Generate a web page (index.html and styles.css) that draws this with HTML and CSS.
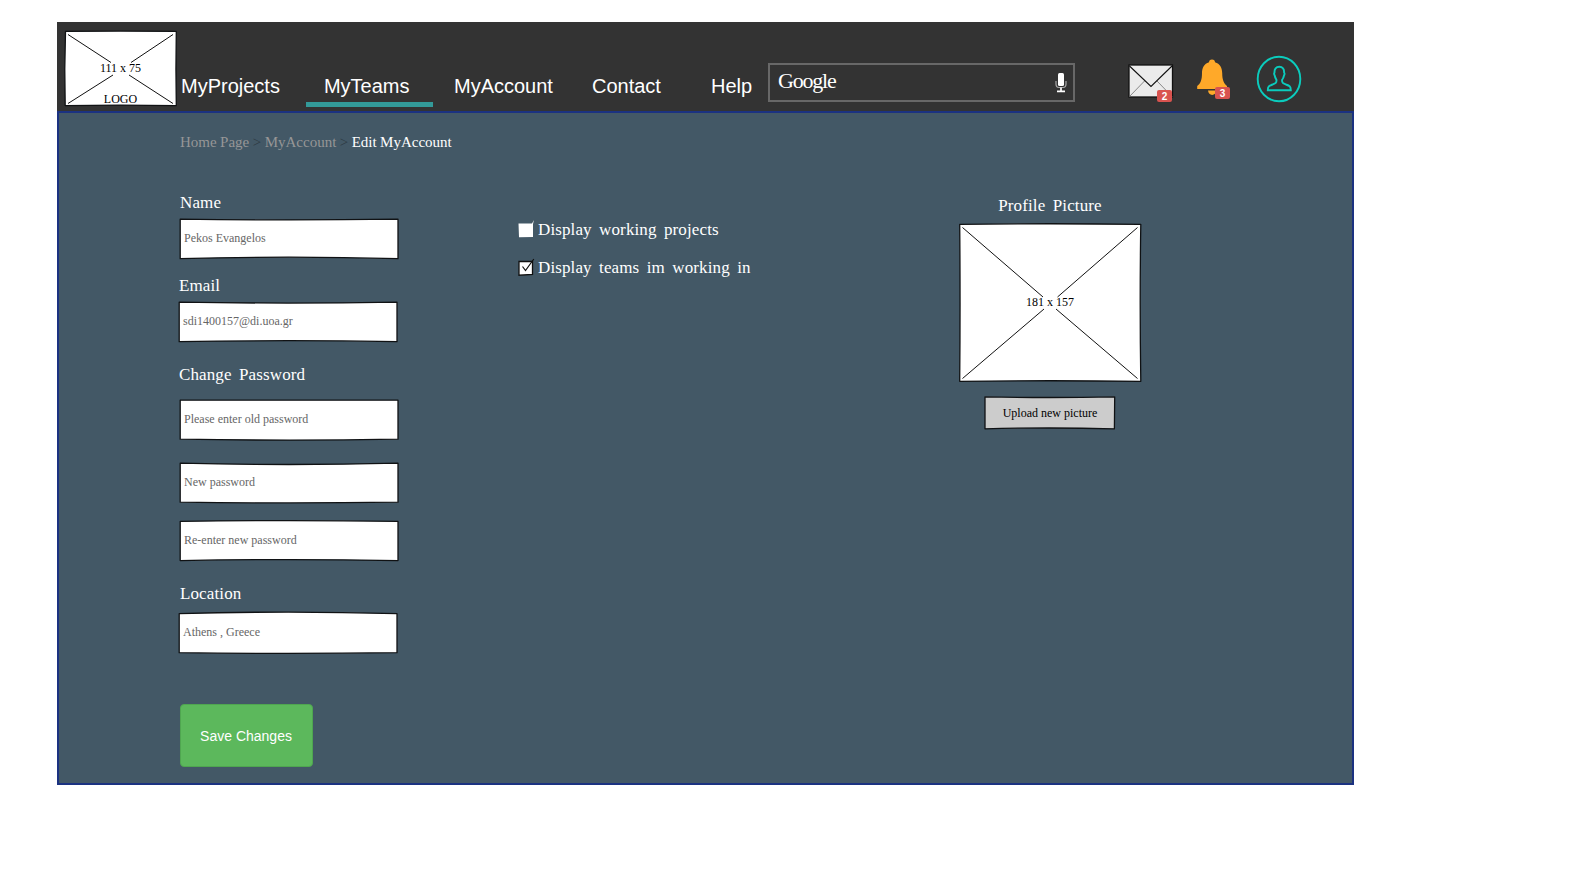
FILE: index.html
```html
<!DOCTYPE html>
<html lang="en">
<head>
<meta charset="utf-8">
<title>Edit MyAccount</title>
<link rel="stylesheet" href="styles.css">
</head>
<body>
<header class="topbar">
  <a class="logo">
    <svg class="sketch" width="113" height="76" viewBox="0 0 113 76"><path class="paper" d="M1.500 .4Q56 -.2 112.300 .4Q111.600 38 112.300 74.600Q56 73.600 1.200 74.600Q.2 38 1.500 .4Z"/><path class="cross" d="M4 3.500 47 31.500M109 3.500 67 31.500M4 72.500 49 44M109 72.500 65 44"/></svg>
    <span class="logo-size">111 x 75</span>
    <span class="logo-name">LOGO</span>
  </a>
  <nav class="nav">
    <a class="nav-projects">MyProjects</a>
    <a class="nav-teams">MyTeams</a>
    <a class="nav-account">MyAccount</a>
    <a class="nav-contact">Contact</a>
    <a class="nav-help">Help</a>
  </nav>
  <div class="search">
    <span class="brand">Google</span>
    <svg width="12" height="20" viewBox="0 0 12 20"><rect x="3" y="0" width="6" height="13" rx="1.500" fill="#fff"/><path d="M1 8v3Q1 14.500 4 14.500H8Q11 14.500 11 11V8" fill="none" stroke="#aaa" stroke-width="1.200"/><path d="M6 14.500V18M2 18.300H10" stroke="#fff" stroke-width="1.700"/></svg>
  </div>
  <div class="mail">
    <svg width="46" height="36" viewBox="0 0 46 36"><rect x="1" y="1" width="43.500" height="32" fill="#ebebeb" stroke="#111" stroke-width="1.300"/><path d="M1.500 32.500 16.500 17M44 32.500 29 17" stroke="#888" stroke-width="1"/><path d="M1.500 2 23 22.500 44 2" fill="none" stroke="#111" stroke-width="1.100"/></svg>
    <span class="badge">2</span>
  </div>
  <div class="bell">
    <svg width="31" height="37" viewBox="0 0 31 37"><path d="M15 .5C17 .5 18 1.800 18 3.200C23 4.700 25.200 9 25.200 14C25.200 21 27 24.500 30 27V30H.2V27C3.500 24.500 5 21 5 14C5 9 7.200 4.700 12 3.200C12 1.800 13 .5 15 .5ZM11 31.600H19.500C19 34.500 17.500 36 15.200 36S11.500 34.500 11 31.600Z" fill="#ffa929"/></svg>
    <span class="badge">3</span>
  </div>
  <svg class="user" width="46" height="48" viewBox="0 0 46 48" fill="none" stroke="#0bccbd" stroke-width="1.900"><ellipse cx="23" cy="24" rx="21.300" ry="22.300"/><path d="M23.300 11.800C20 11.800 18.300 14 18.500 17.500C18.200 18 18 19.500 18.700 20.500C19 22.500 19.800 23.800 20.500 25C20.600 28 19.500 28.300 16.500 29.500C13 30.800 11.800 31.500 11.800 35.300H34.800C34.800 31.500 33.600 30.800 30 29.500C27 28.300 26 28 26 25C27 23.800 27.600 22.500 28 20.500C28.600 19.500 28.500 18 28.100 17.500C28.300 14 26.600 11.800 23.300 11.800Z"/></svg>
</header>
<main class="panel">
  <div class="crumbs"><a>Home Page</a> <i>&gt;</i> <a>MyAccount</a> <i>&gt;</i> <b>Edit MyAccount</b></div>
  <div class="columns">
    <form class="account">
      <label class="title">Name</label>
      <div class="field f-name"><svg class="sketch" width="221" height="42" viewBox="0 0 221 42"><path class="paper" d="M1.200 1.200Q110 2.700 219 1.200V40.700Q110 37.700 1.200 40.700Z"/></svg><span>Pekos Evangelos</span></div>
      <label class="title t-email">Email</label>
      <div class="field f-email"><svg class="sketch" width="221" height="42" viewBox="0 0 221 42"><path class="paper" d="M1.200 1.200Q110 2.900 219 1.200V40.700Q110 38.700 1.200 40.700Z"/></svg><span>sdi1400157@di.uoa.gr</span></div>
      <label class="title t-password">Change Password</label>
      <div class="field f-old"><svg class="sketch" width="221" height="42" viewBox="0 0 221 42"><path class="paper" d="M1.200 1.200Q110 1.400 219 1.200V40.200Q110 42 1.200 40.200Z"/></svg><span>Please enter old password</span></div>
      <div class="field f-new"><svg class="sketch" width="221" height="42" viewBox="0 0 221 42"><path class="paper" d="M1.200 1.200Q110 3.800 219 1.200V40.200Q110 41.700 1.200 40.200Z"/></svg><span>New password</span></div>
      <div class="field f-again"><svg class="sketch" width="221" height="42" viewBox="0 0 221 42"><path class="paper" d="M1.200 1.400Q110 -.2 219 1.400V40.600Q110 38.600 1.200 40.600Z"/></svg><span>Re-enter new password</span></div>
      <label class="title t-location">Location</label>
      <div class="field f-location"><svg class="sketch" width="221" height="42" viewBox="0 0 221 42"><path class="paper" d="M1.200 1.700Q110 -1.500 219 1.700V40.700Q110 42 1.200 40.700Z"/></svg><span>Athens , Greece</span></div>
      <button class="save" type="button">Save Changes</button>
    </form>
    <div class="options">
      <label class="option title"><svg width="17" height="18" viewBox="0 0 17 18"><path d="M.5 3.500H14L16 0 15 4V17L1 17.300Z" fill="#fff"/></svg>Display working projects</label>
      <label class="option title"><svg width="17" height="18" viewBox="0 0 17 18"><path d="M1 3.500H14.500V16.500L1 17.200Z" fill="#fff" stroke="#111" stroke-width="1.300"/><path d="M4.500 8.500 7.500 12.500 15.800 1" fill="none" stroke="#111" stroke-width="1.200"/></svg>Display teams im working in</label>
    </div>
    <section class="profile">
      <div class="title">Profile Picture</div>
      <div class="picture"><svg class="sketch" width="182" height="159" viewBox="0 0 182 159"><path class="paper" d="M.7 1.300Q91 .2 181.800 1.300Q180.600 79 181.800 158.300Q91 157.200 .7 158.300Q1.400 79 .7 1.300Z"/><path class="cross" d="M3.500 4.500 84 74M178.500 4.500 98.500 74M3.500 155.500 85 86M178.500 155.500 97 86"/></svg><span>181 x 157</span></div>
      <div class="upload"><svg class="sketch" width="132" height="34" viewBox="0 0 132 34"><path class="paper grey" d="M1 .8Q65 2.200 130.700 .8L130.400 32.800Q65 31.200 1 32.800Z"/></svg><span>Upload new picture</span></div>
    </section>
  </div>
</main>
</body>
</html>
```
FILE: styles.css
```css
* { box-sizing: border-box; }
body { margin: 0; padding: 22px 0 0 57px; background: #fff; font-family: "Liberation Serif", serif; }
.topbar { display: flex; align-items: flex-start; width: 1297px; height: 89px; background: #333; }
.sketch { position: absolute; left: 0; top: 0; overflow: visible; }
.paper { fill: #fff; stroke: #101214; stroke-width: 1.3; stroke-linejoin: round; }
.grey { fill: #ccc; }
.cross { fill: none; stroke: #111; stroke-width: 1; }

.logo { position: relative; display: flex; flex-direction: column; align-items: center; width: 113px; height: 76px; margin: 9px 0 0 7px; padding-top: 30px; font-size: 12px; line-height: 14px; color: #000; }
.logo span { position: relative; }
.logo-name { margin-top: 17px; }

.nav { display: flex; margin-left: 4px; height: 85px; width: 587px; font: 20px/24px "Liberation Sans", sans-serif; color: #fff; }
.nav a { padding-top: 52px; flex: none; }
.nav-projects { width: 124.5px; }
.nav-teams { width: 127.5px; text-align: center; padding-right: 5px; border-bottom: 5px solid #339a99; }
.nav-account { margin-left: 21px; width: 138px; }
.nav-contact { width: 119px; }

.search { display: flex; justify-content: space-between; width: 307px; height: 39px; margin-top: 41px; padding: 8px 6px 0 8px; border: 2px solid #686868; }
.brand { font-size: 22px; line-height: 22px; letter-spacing: -1.2px; color: #fff; margin-top: -3px; }
.mail { position: relative; width: 46px; margin: 42px 0 0 53px; }
.bell { position: relative; width: 31px; margin: 37px 0 0 23px; }
.badge { position: absolute; right: 2px; top: 26px; width: 15px; height: 12px; border-radius: 2px; background: #d9534f; color: #fff; font: bold 10px/13px "Liberation Sans", sans-serif; text-align: center; }
.bell .badge { top: 28px; right: -2px; }
.mail svg, .bell svg { display: block; }
.user { margin: 33px 0 0 28px; }

.panel { width: 1297px; height: 674px; border: 2px solid #1b3281; background: #435866; padding: 20px 0 0 121px; }
.crumbs { font-size: 15px; line-height: 18px; color: #2d3a43; white-space: nowrap; word-spacing: -.3px; }
.crumbs a { color: #969696; }
.crumbs i { font-style: normal; }
.crumbs b { font-weight: normal; color: #fff; }
.columns { display: flex; align-items: flex-start; padding-top: 42px; }
.title { display: block; font-size: 17px; line-height: 20px; letter-spacing: .12px; word-spacing: 3px; color: #fff; white-space: nowrap; }

.account { width: 220px; margin-left: -1px; }
.account .title { margin-left: 1px; }
.field { position: relative; width: 221px; height: 42px; padding-left: 5px; font-size: 12px; line-height: 40px; color: #666; }
.field .sketch { top: -.5px; }
.field span { position: relative; }
.f-name { margin-top: 5px; }
.account .t-email { margin: 16px 0 0; }
.f-email { margin: 5px 0 0 -1px; }
.account .t-password { margin: 22px 0 0; }
.f-old { margin-top: 14px; }
.f-new { margin-top: 21px; }
.f-again { margin-top: 16px; }
.account .t-location { margin-top: 22px; }
.f-location { margin: 8px 0 0 -1px; }
.save { display: block; width: 133px; height: 63px; margin: 50px 0 0 .5px; padding: 0; border: 1px solid #4fa650; border-radius: 4px; background: #5cb85c; color: #fff; font: 14px "Liberation Sans", sans-serif; }

.options { width: 260px; margin: 27px 0 0 119px; }
.option { display: flex; height: 20px; margin-bottom: 18px; }
.option svg { flex: none; margin: 0 3px 0 0; }

.profile { display: flex; flex-direction: column; align-items: center; width: 182px; margin: 3px 0 0 181px; }
.picture { position: relative; width: 182px; height: 159px; margin-top: 7px; text-align: center; font-size: 12px; line-height: 159px; }
.upload { position: relative; width: 132px; height: 34px; margin-top: 14px; text-align: center; font-size: 12px; line-height: 34px; }
.picture span, .upload span { position: relative; }
```
